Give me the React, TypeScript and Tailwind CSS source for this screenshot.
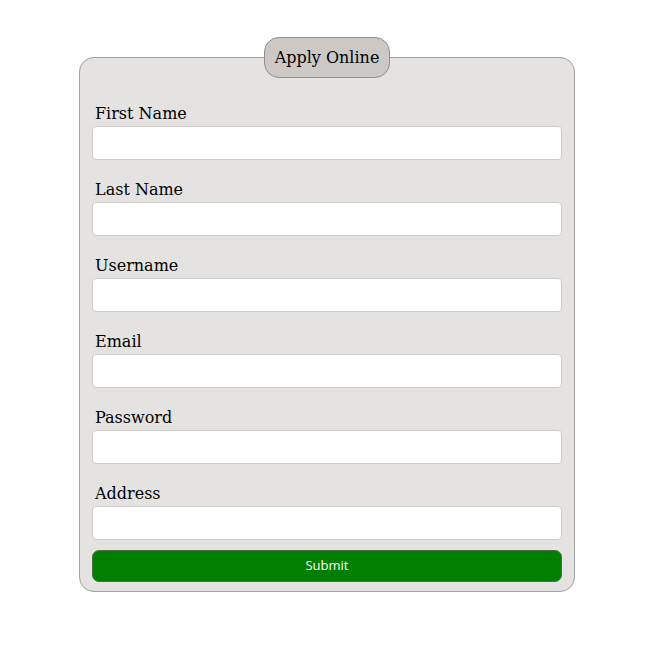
import React from 'react'

const fields = ['First Name', 'Last Name', 'Username', 'Email', 'Password', 'Address']

const App: React.FC = () => {
  return (
    <div className="min-h-[667px] w-full bg-white pt-[37px] font-['DejaVu_Serif',serif] text-black">
      <form className="ml-[79px] w-[496px]" onSubmit={(e) => e.preventDefault()}>
        <fieldset className="rounded-[15px] border border-[#a3a3a3] bg-[#e5e3e1] px-[12px] pb-[9px] pt-[6px]">
          <legend className="mx-auto rounded-[15px] border border-[#8f8f8f] bg-[#ccc8c6] px-[10px] py-[10px] text-[16px] leading-[19px]">
            Apply Online
          </legend>
          {fields.map((f) => (
            <div key={f} className="mt-[20px]">
              <label className="mb-[3px] block pl-[3px] text-[16px] leading-[19px]">{f}</label>
              <input
                type={f === 'Password' ? 'password' : f === 'Email' ? 'email' : 'text'}
                className="block h-[34px] w-full rounded-[4px] border border-[#cfcbc8] bg-white px-2 outline-none"
              />
            </div>
          ))}
          <button
            type="submit"
            className="mt-[10px] block h-[32px] w-full rounded-[7px] border border-[#4d6b4d] bg-[#008000] font-['Open_Sans',sans-serif] text-[13px] text-white"
          >
            Submit
          </button>
        </fieldset>
      </form>
    </div>
  )
}

export default App
